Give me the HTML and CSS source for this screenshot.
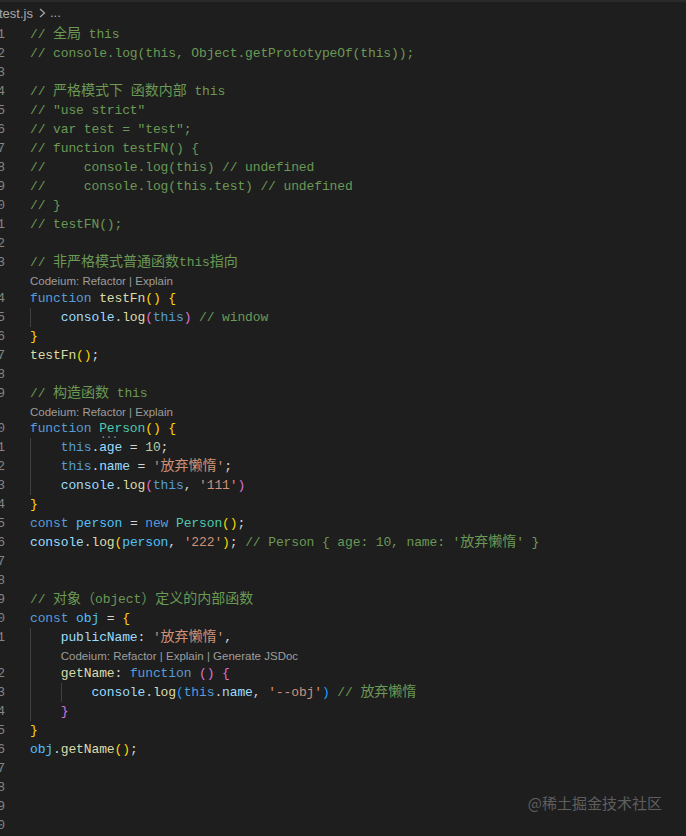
FILE: index.html
```html
<!DOCTYPE html>
<html>
<head>
<meta charset="utf-8">
<link rel="stylesheet" href="styles.css">
</head>
<body>
	<div class="crumbs">
		<span class="file">test.js</span>
		<svg class="chev" width="10" height="12" viewBox="0 0 10 12"><path d="M3 2 L7.5 6 L3 10" fill="none" stroke="#a8a8a8" stroke-width="1.2"/></svg>
		<span class="more">...</span>
	</div>

	<div class="editor">
		<div class="line"><span class="ln">1</span><span class="c">// <span class="z">全局</span> this</span></div>
		<div class="line"><span class="ln">2</span><span class="c">// console.log(this, Object.getPrototypeOf(this));</span></div>
		<div class="line"><span class="ln">3</span></div>
		<div class="line"><span class="ln">4</span><span class="c">// <span class="z">严格模式下</span> <span class="z">函数内部</span> this</span></div>
		<div class="line"><span class="ln">5</span><span class="c">// "use strict"</span></div>
		<div class="line"><span class="ln">6</span><span class="c">// var test = "test";</span></div>
		<div class="line"><span class="ln">7</span><span class="c">// function testFN() {</span></div>
		<div class="line"><span class="ln">8</span><span class="c">//     console.log(this) // undefined</span></div>
		<div class="line"><span class="ln">9</span><span class="c">//     console.log(this.test) // undefined</span></div>
		<div class="line"><span class="ln">10</span><span class="c">// }</span></div>
		<div class="line"><span class="ln">11</span><span class="c">// testFN();</span></div>
		<div class="line"><span class="ln">12</span></div>
		<div class="line"><span class="ln">13</span><span class="c">// <span class="z">非严格模式普通函数</span>this<span class="z">指向</span></span></div>
		<div class="lens"><span class="ln"></span>Codeium: Refactor | Explain</div>
		<div class="line"><span class="ln">14</span><span class="k">function</span> <span class="f">testFn</span><span class="b1">()</span> <span class="b1">{</span></div>
		<div class="line"><span class="ln">15</span><span class="ind"></span><span class="v">console</span>.<span class="f">log</span><span class="b2">(</span><span class="k">this</span><span class="b2">)</span> <span class="c">// window</span></div>
		<div class="line"><span class="ln">16</span><span class="b1">}</span></div>
		<div class="line"><span class="ln">17</span><span class="f">testFn</span><span class="b1">()</span>;</div>
		<div class="line"><span class="ln">18</span></div>
		<div class="line"><span class="ln">19</span><span class="c">// <span class="z">构造函数</span> this</span></div>
		<div class="lens"><span class="ln"></span>Codeium: Refactor | Explain</div>
		<div class="line"><span class="ln">20</span><span class="k">function</span> <span class="t hint">Person</span><span class="b1">()</span> <span class="b1">{</span></div>
		<div class="line"><span class="ln">21</span><span class="ind"></span><span class="k">this</span>.<span class="v">age</span> = <span class="n">10</span>;</div>
		<div class="line"><span class="ln">22</span><span class="ind"></span><span class="k">this</span>.<span class="v">name</span> = <span class="s">'<span class="z">放弃懒惰</span>'</span>;</div>
		<div class="line"><span class="ln">23</span><span class="ind"></span><span class="v">console</span>.<span class="f">log</span><span class="b2">(</span><span class="k">this</span>, <span class="s">'111'</span><span class="b2">)</span></div>
		<div class="line"><span class="ln">24</span><span class="b1">}</span></div>
		<div class="line"><span class="ln">25</span><span class="k">const</span> <span class="cn">person</span> = <span class="k">new</span> <span class="t">Person</span><span class="b1">()</span>;</div>
		<div class="line"><span class="ln">26</span><span class="v">console</span>.<span class="f">log</span><span class="b1">(</span><span class="cn">person</span>, <span class="s">'222'</span><span class="b1">)</span>; <span class="c">// Person { age: 10, name: '<span class="z">放弃懒惰</span>' }</span></div>
		<div class="line"><span class="ln">27</span></div>
		<div class="line"><span class="ln">28</span></div>
		<div class="line"><span class="ln">29</span><span class="c">// <span class="z">对象（</span>object<span class="z">）定义的内部函数</span></span></div>
		<div class="line"><span class="ln">30</span><span class="k">const</span> <span class="cn">obj</span> = <span class="b1">{</span></div>
		<div class="line"><span class="ln">31</span><span class="ind"></span><span class="v">publicName</span>: <span class="s">'<span class="z">放弃懒惰</span>'</span>,</div>
		<div class="lens"><span class="ln"></span><span class="ind"></span>Codeium: Refactor | Explain | Generate JSDoc</div>
		<div class="line"><span class="ln">32</span><span class="ind"></span><span class="f">getName</span>: <span class="k">function</span> <span class="b2">()</span> <span class="b2">{</span></div>
		<div class="line"><span class="ln">33</span><span class="ind"></span><span class="ind"></span><span class="v">console</span>.<span class="f">log</span><span class="b3">(</span><span class="k">this</span>.<span class="v">name</span>, <span class="s">'--obj'</span><span class="b3">)</span> <span class="c">// <span class="z">放弃懒惰</span></span></div>
		<div class="line"><span class="ln">34</span><span class="ind"></span><span class="b2">}</span></div>
		<div class="line"><span class="ln">35</span><span class="b1">}</span></div>
		<div class="line"><span class="ln">36</span><span class="cn">obj</span>.<span class="f">getName</span><span class="b1">()</span>;</div>
		<div class="line"><span class="ln">37</span></div>
		<div class="line"><span class="ln">38</span></div>
		<div class="line"><span class="ln">39</span></div>
		<div class="line"><span class="ln">40</span></div>
	</div>

	<div class="mark">@稀土掘金技术社区</div>
</body>
</html>
```

FILE: styles.css
```css
html, body {
	margin: 0;
	padding: 0;
	background-color: #1e1e1e;
	overflow: hidden;
}
body {
	height: 836px;
	position: relative;
}
.crumbs {
	border-top: 2px solid #2a2a2a;
	height: 22px;
	display: flex;
	align-items: center;
	margin-left: -1px;
	font-family: "Liberation Sans", Arial, sans-serif;
	font-size: 13px;
	color: #a9a9a9;
}
.chev {
	margin: 0 3px 0 4px;
}
.more {
	position: relative;
	top: -1px;
}
.editor {
	margin-left: -40px;
	padding-top: 1px;
	font-family: "Liberation Mono", "Noto Sans CJK SC", monospace;
	font-size: 13px;
	letter-spacing: -0.12px;
	color: #d4d4d4;
}
.line {
	height: 19px;
	line-height: 19px;
	white-space: pre;
}
.ln {
	display: inline-block;
	width: 45px;
	margin-right: 25px;
	vertical-align: top;
	text-align: right;
	color: #858585;
	letter-spacing: 0;
}
.lens {
	height: 16.5px;
	line-height: 19px;
	white-space: pre;
	font-family: "Liberation Sans", Arial, sans-serif;
	font-size: 11.5px;
	letter-spacing: 0;
	color: #9d9d9d;
}
.lens .ln {
	height: 16.5px;
}
.lens .ind {
	height: 16.5px;
}
.ind {
	display: inline-block;
	width: 30.72px;
	height: 19px;
	vertical-align: top;
	border-left: 1px solid #404040;
	box-sizing: border-box;
}
.z {
	font-family: "Noto Sans CJK SC", sans-serif;
	font-size: 14px;
	line-height: 1;
	letter-spacing: 0;
}
.c { color: #6a9955; }
.k { color: #569cd6; }
.f { color: #dcdcaa; }
.v { color: #9cdcfe; }
.cn { color: #4fc1ff; }
.t { color: #4ec9b0; }
.s { color: #ce9178; }
.n { color: #b5cea8; }
.b1 { color: #ffd700; }
.b2 { color: #da70d6; }
.b3 { color: #179fff; }
.hint {
	position: relative;
}
.hint::after {
	content: "...";
	position: absolute;
	left: 1px;
	top: 5px;
	font-size: 10px;
	color: #9a9a9a;
}
.mark {
	position: absolute;
	right: 24px;
	top: 793px;
	font-family: "Noto Sans CJK SC", sans-serif;
	font-size: 15px;
	line-height: 20px;
	color: #5e5e5e;
}
```
